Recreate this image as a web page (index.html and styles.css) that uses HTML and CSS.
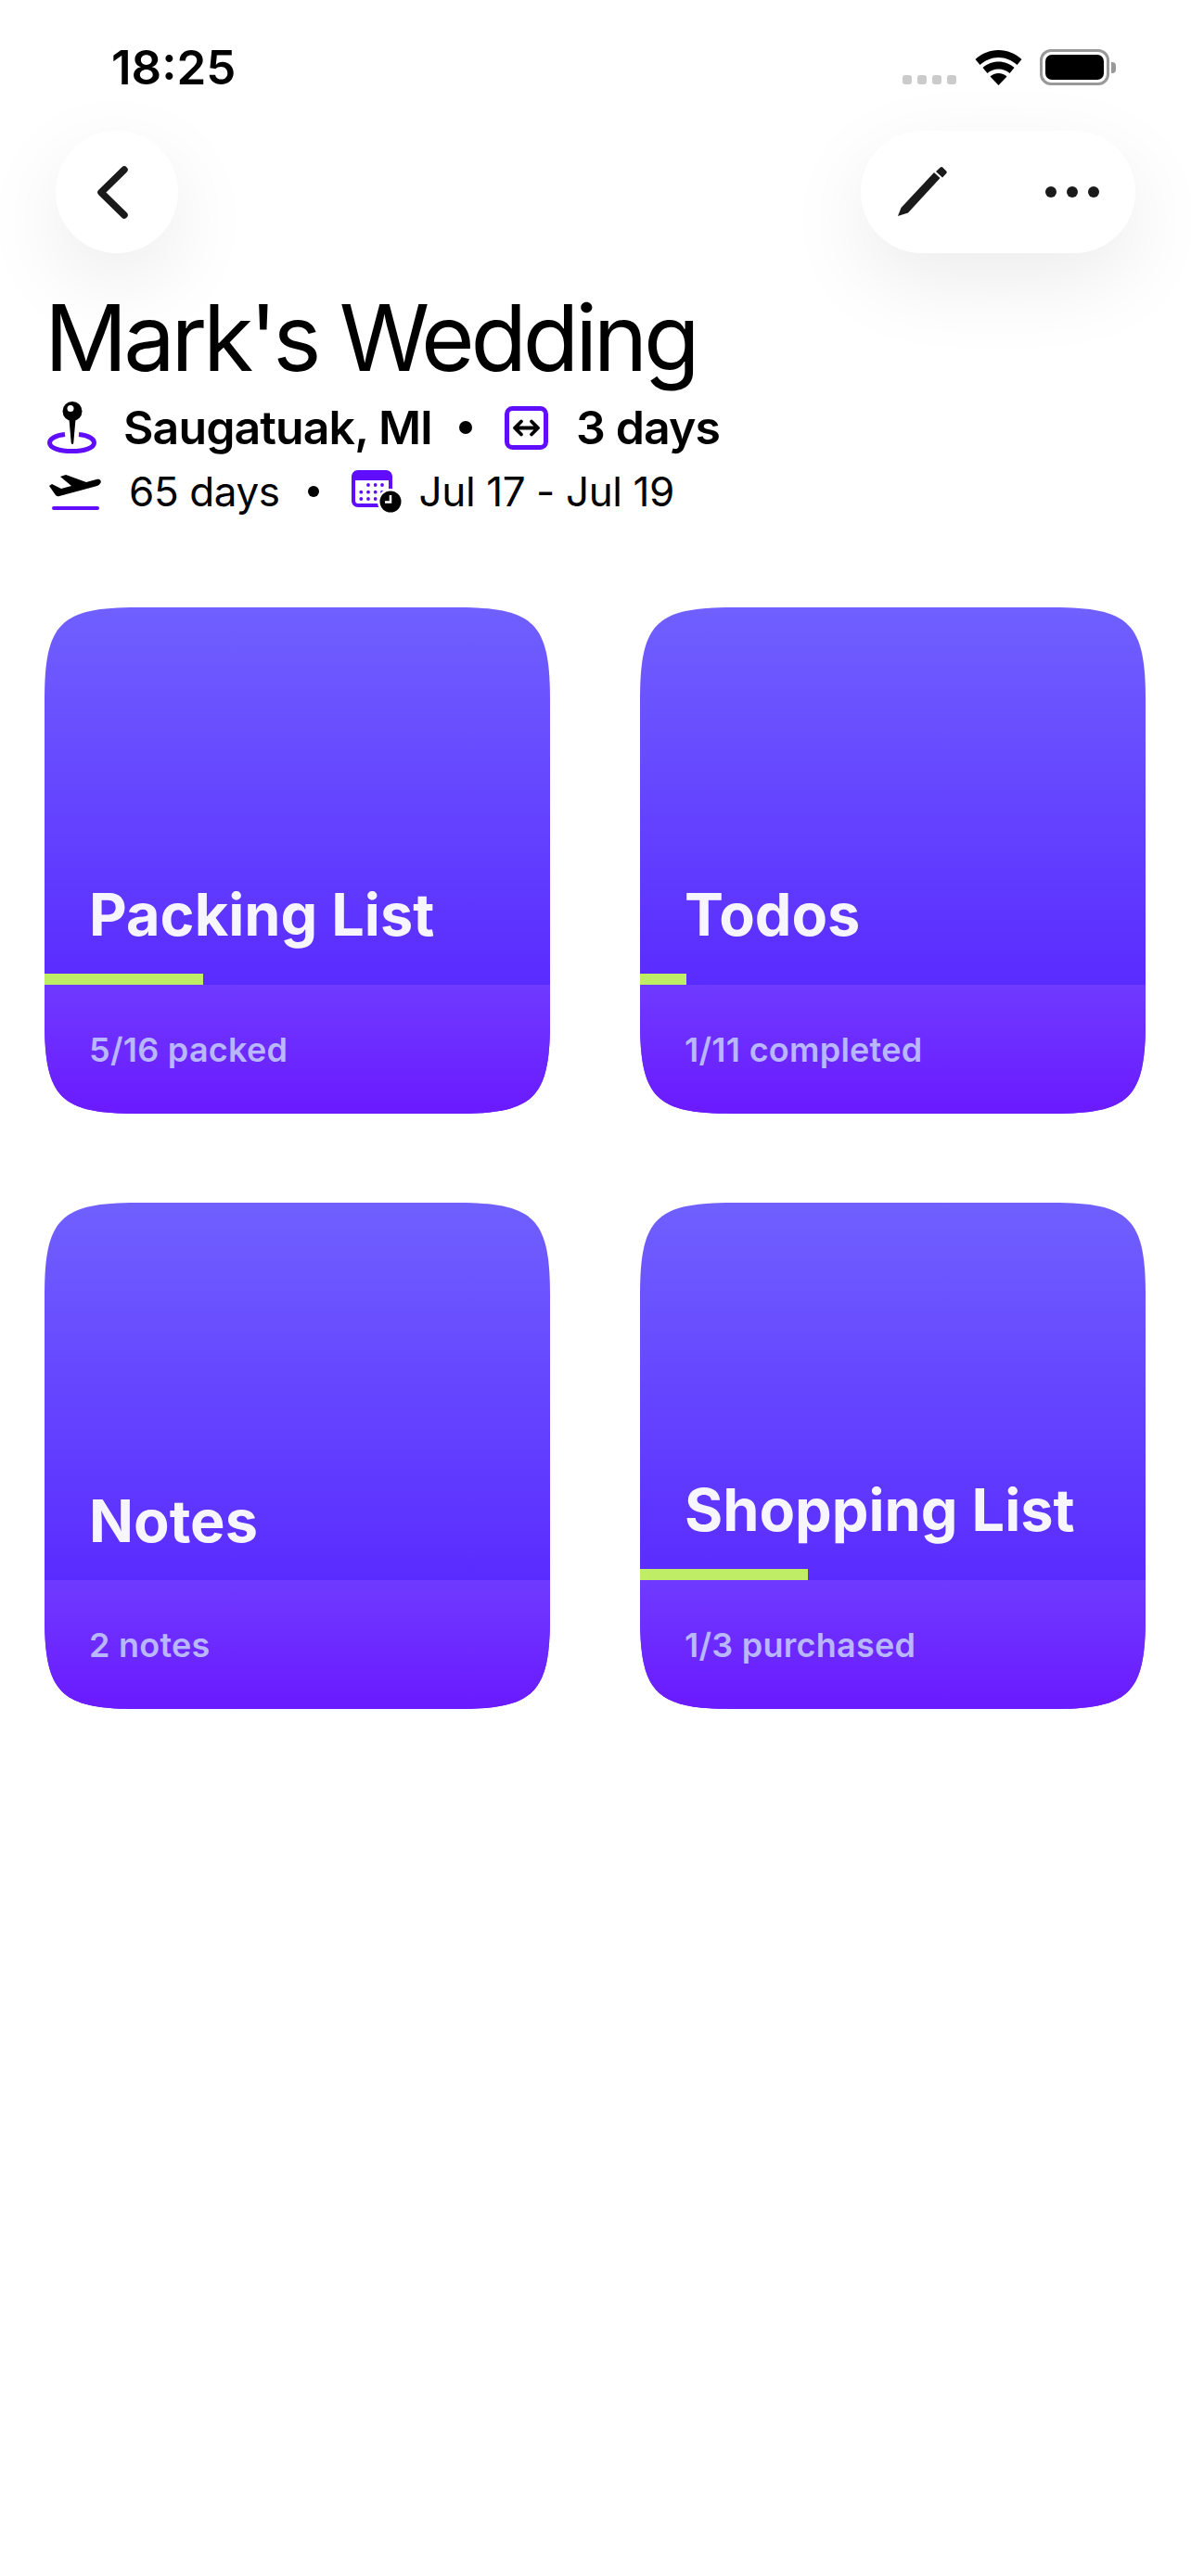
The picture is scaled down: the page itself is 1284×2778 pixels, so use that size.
FILE: index.html
```html
<!DOCTYPE html>
<html lang="en">
<head>
<meta charset="utf-8">
<title>Mark's Wedding</title>
<link rel="stylesheet" href="styles.css">
</head>
<body>
<div class="status">
  <span class="time">18:25</span>
  <div class="status-icons">
    <div class="signal"><i></i><i></i><i></i><i></i></div>
    <svg class="wifi" width="51" height="38" viewBox="0 0 51 38"><path d="M25.5 0C16 0 7.300 3.800 .5 10l5 6C11 11 18 8 25.500 8S40 11 45.500 16l5-6C43.700 3.800 35 0 25.500 0z"/><path d="M25.500 12.500c-6.500 0-12.500 2.500-17 6.500l5 6c3.200-2.800 7.400-4.500 12-4.500s8.800 1.700 12 4.500l5-6c-4.500-4-10.500-6.500-17-6.500z"/><path d="M25.500 25c-3.500 0-6.700 1.300-9 3.400L25.500 38l9-9.600c-2.300-2.100-5.500-3.400-9-3.400z"/></svg>
    <div class="battery"><div class="battery-body"><div class="battery-level"></div></div><div class="battery-nub"></div></div>
  </div>
</div>
<div class="toolbar">
  <div class="btn-round">
    <svg width="33" height="57" viewBox="0 0 33 57"><path d="M29 4L4 28.500 29 53" fill="none" stroke="#1a1a1a" stroke-width="7.500" stroke-linecap="round" stroke-linejoin="round"/></svg>
  </div>
  <div class="btn-pill">
    <svg width="54" height="54" viewBox="0 0 54 54"><path fill="#1a1a1a" d="M0 53l3.500-9L39 6l6.500 6L11 49.500z"/><path fill="#1a1a1a" d="M41 5l4.500-4.200c1-1 2-1 3 0l3.500 3.500c1 1 1 2 0 3L48 11.500z"/></svg>
    <div class="dots"><i></i><i></i><i></i></div>
  </div>
</div>
<header class="head">
  <h1 class="title">Mark's Wedding</h1>
  <div class="meta meta-main">
    <svg class="ic-pin" width="54" height="56" viewBox="0 0 54 56"><path fill="none" stroke="#5f0dfb" stroke-width="5" d="M19 35.500C9 36.500 2.500 40 2.500 44.500 2.500 50 13 53.500 26.500 53.500S50.500 50 50.500 44.500C50.500 40 44 36.500 34 35.500"/><circle cx="27" cy="10.500" r="10.500"/><circle cx="25" cy="7.500" r="3.500" fill="#fff"/><path d="M23.500 19h7l-2.200 25c-.2 2.700-2.400 2.700-2.600 0z"/></svg>
    <span class="strong place">Saugatuak, MI</span>
    <span class="bullet bullet-lg"></span>
    <svg class="ic-len" width="47" height="47" viewBox="0 0 47 47"><rect x="2.500" y="2.500" width="42" height="42" rx="6" fill="none" stroke="#5f0dfb" stroke-width="5"/><path d="M11 23.500H36M18 16.500l-7 7 7 7M29 16.500l7 7-7 7" fill="none" stroke="#000" stroke-width="3.800" stroke-linecap="round" stroke-linejoin="round"/></svg>
    <span class="strong">3 days</span>
  </div>
  <div class="meta meta-sub">
    <svg class="ic-plane" width="57" height="40" viewBox="0 0 57 40"><path d="M0 14l3-2 10 5 11-3L12 4l6-2 22 8 11-3c4-1 6 2 4 4.500-1 1.500-3 2.500-5 3L11 25c-2 .5-3 0-4-1z"/><rect x="3" y="36" width="51" height="4" rx="2" fill="#5f0dfb"/></svg>
    <span class="reg days">65 days</span>
    <span class="bullet"></span>
    <span class="ic-cal-wrap">
      <svg width="54" height="46" viewBox="0 0 54 46"><path fill="#5f0dfb" d="M7 0h30c3.900 0 7 3.100 7 7v27H40V11H4v22c0 1.700 1.300 3 3 3h24v4H7c-3.900 0-7-3.100-7-7V7c0-3.900 3.100-7 7-7z"/><g fill="#5f0dfb"><circle cx="18" cy="16" r="1.900"/><circle cx="25.700" cy="16" r="1.900"/><circle cx="33" cy="16" r="1.900"/><circle cx="10.300" cy="23.700" r="1.900"/><circle cx="18" cy="23.700" r="1.900"/><circle cx="25.700" cy="23.700" r="1.900"/><circle cx="33" cy="23.700" r="1.900"/><circle cx="10.300" cy="31" r="1.900"/><circle cx="18" cy="31" r="1.900"/><circle cx="25.700" cy="31" r="1.900"/></g><circle cx="42" cy="34" r="14" fill="#fff"/><circle cx="42" cy="34" r="11.500"/><path d="M42 27v7.500h-6" fill="none" stroke="#fff" stroke-width="2.500"/></svg>
    </span>
    <span class="reg">Jul 17 - Jul 19</span>
  </div>
</header>
<main class="grid">
  <section class="card">
    <div class="card-top"><div class="card-title">Packing List</div><div class="bar" style="width:31.400%"></div></div>
    <div class="card-foot">5/16 packed</div>
  </section>
  <section class="card">
    <div class="card-top"><div class="card-title">Todos</div><div class="bar" style="width:9.100%"></div></div>
    <div class="card-foot">1/11 completed</div>
  </section>
  <section class="card">
    <div class="card-top"><div class="card-title">Notes</div></div>
    <div class="card-foot">2 notes</div>
  </section>
  <section class="card">
    <div class="card-top"><div class="card-title">Shopping List</div><div class="bar" style="width:33.300%"></div></div>
    <div class="card-foot">1/3 purchased</div>
  </section>
</main>
</body>
</html>
```
FILE: styles.css
```css
* { box-sizing: border-box; }
html, body { margin: 0; padding: 0; background: #fff; }
body { width: 1284px; height: 2778px; overflow: hidden; font-family: Inter, "Noto Sans", sans-serif; color: #000; }

.status { display: flex; justify-content: space-between; height: 141px; padding: 53px 81px 0 120px; }
.time { font-size: 51px; font-weight: 600; line-height: 39px; height: 39px; }
.status-icons { display: flex; align-items: flex-start; height: 39px; }
.signal { display: flex; gap: 6px; margin-top: 28px; margin-right: 20px; }
.signal i { width: 10px; height: 10px; border-radius: 3px; background: #cbcbcb; }
.wifi { margin-top: 1px; margin-right: 19px; }
.battery { display: flex; align-items: center; height: 39px; }
.battery-body { width: 75px; height: 39px; border: 3px solid #999; border-radius: 12px; padding: 3px; }
.battery-level { width: 100%; height: 100%; background: #000; border-radius: 7px; }
.battery-nub { width: 5px; height: 12px; background: #999; border-radius: 0 4px 4px 0; margin-left: 2px; }

.toolbar { display: flex; justify-content: space-between; padding: 0 60px; }
.btn-round { width: 132px; height: 132px; border-radius: 50%; background: #fff; box-shadow: 0 30px 90px rgba(0,0,0,.08); display: flex; align-items: center; justify-content: center; padding-right: 9px; }
.btn-pill { width: 296px; height: 132px; border-radius: 66px; background: #fff; box-shadow: 0 30px 90px rgba(0,0,0,.08); display: flex; align-items: center; justify-content: space-between; padding: 0 39px 0 40px; }
.dots { display: flex; gap: 11px; }
.dots i { width: 12px; height: 12px; border-radius: 50%; background: #1a1a1a; }

.head { padding: 0 48px; }
.title { margin: 43px 0 0; font-size: 99px; font-weight: 400; line-height: 96px; letter-spacing: -4.3px; }
.meta { display: flex; align-items: center; }
.meta-main { height: 56px; margin-top: 21px; }
.meta-sub { height: 50px; margin-top: 16px; }
.strong { font-size: 50px; font-weight: 600; letter-spacing: -.9px; }
.reg { font-size: 44px; font-weight: 400; letter-spacing: -.4px; }
.place { margin-left: 28px; }
.bullet { width: 12px; height: 12px; border-radius: 50%; background: #000; margin: 0 35px 0 30px; }
.bullet-lg { width: 14px; height: 14px; margin: 0 35px 0 29px; }
.ic-pin { margin-left: 3px; flex: none; }
.ic-len { flex: none; margin-right: 30px; }
.ic-plane { margin-left: 5px; flex: none; }
.days { margin-left: 29px; }
.ic-cal-wrap { display: flex; margin-right: 19px; }

.grid { display: grid; grid-template-columns: 545px 545px; column-gap: 97px; row-gap: 96px; padding: 0 48px; margin-top: 100px; }
.card { width: 545px; height: 546px; display: flex; flex-direction: column; background: linear-gradient(180deg, #7060ff 0%, #5a2bff 75%, #6a1aff 100%); clip-path: path("M0 100C0 17 17 0 100 0H445C528 0 545 17 545 100V446C545 529 528 546 445 546H100C17 546 0 529 0 446Z"); }
.card-top { height: 407px; display: flex; flex-direction: column; justify-content: flex-end; }
.card-title { color: #f7f5ff; font-size: 63px; font-weight: 700; line-height: 76px; padding-left: 48px; margin-bottom: 26px; }
.bar { height: 12px; background: #bfee66; }
.card-foot { flex: 1; background: linear-gradient(180deg, #6f3aff 0%, #6a1aff 100%); color: #b9b7ff; font-size: 36px; font-weight: 600; letter-spacing: .25px; padding: 49px 0 0 48px; line-height: 42px; }
```
